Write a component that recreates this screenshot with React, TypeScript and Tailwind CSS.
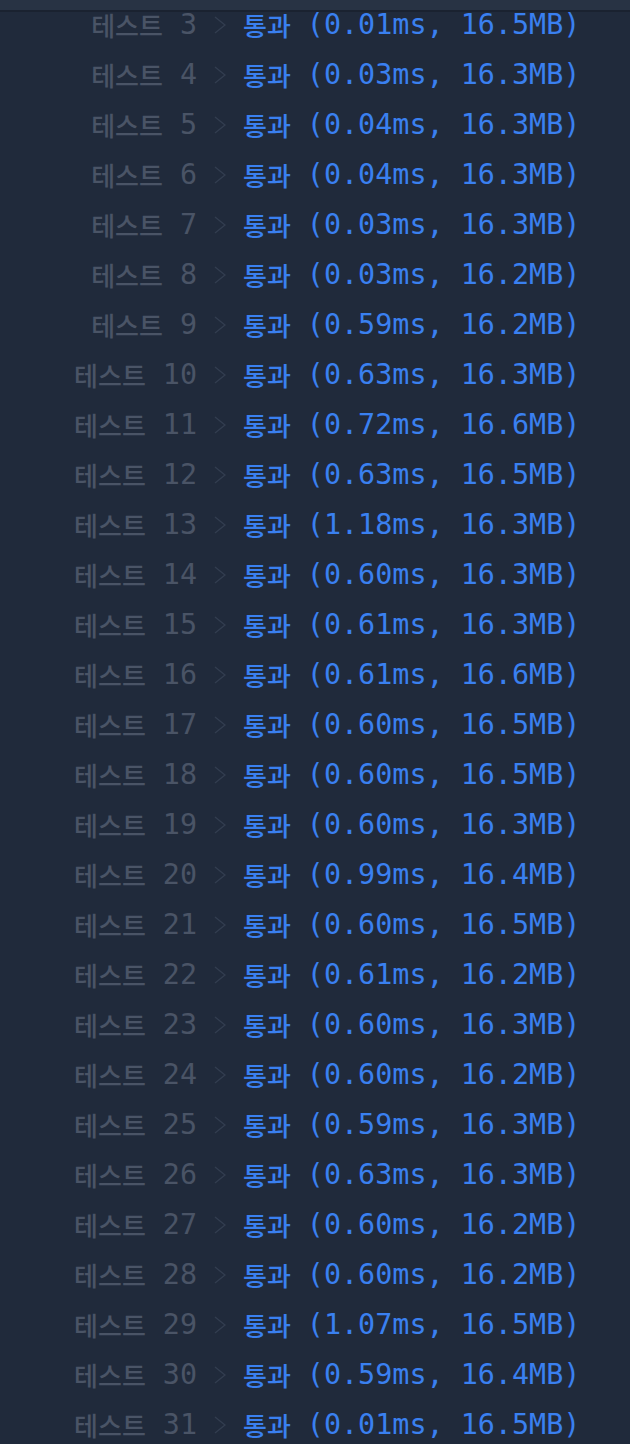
const rows: [number, string, string][] = [
  [3, '0.01', '16.5'],
  [4, '0.03', '16.3'],
  [5, '0.04', '16.3'],
  [6, '0.04', '16.3'],
  [7, '0.03', '16.3'],
  [8, '0.03', '16.2'],
  [9, '0.59', '16.2'],
  [10, '0.63', '16.3'],
  [11, '0.72', '16.6'],
  [12, '0.63', '16.5'],
  [13, '1.18', '16.3'],
  [14, '0.60', '16.3'],
  [15, '0.61', '16.3'],
  [16, '0.61', '16.6'],
  [17, '0.60', '16.5'],
  [18, '0.60', '16.5'],
  [19, '0.60', '16.3'],
  [20, '0.99', '16.4'],
  [21, '0.60', '16.5'],
  [22, '0.61', '16.2'],
  [23, '0.60', '16.3'],
  [24, '0.60', '16.2'],
  [25, '0.59', '16.3'],
  [26, '0.63', '16.3'],
  [27, '0.60', '16.2'],
  [28, '0.60', '16.2'],
  [29, '1.07', '16.5'],
  [30, '0.59', '16.4'],
  [31, '0.01', '16.5'],
];

const mono = "font-['DejaVu_Sans_Mono','Liberation_Mono','Noto_Sans_CJK_KR',monospace]";
const kr = "font-['Noto_Sans_CJK_KR','Noto_Sans',sans-serif]";

const Chevron = () => (
  <svg width="12" height="18" viewBox="0 0 12 18" className="shrink-0">
    <path d="M1 1 L11 9 L1 17" fill="none" stroke="#333e50" strokeWidth="1.3" />
  </svg>
);

export default function App() {
  return (
    <div className="w-[630px] h-[1444px] bg-[#202a3b] overflow-hidden">
      <div className="h-[10px] bg-[#283344]" />
      <div className="h-[2px] bg-[#1a2230]" />
      <div className="-mt-[12px]">
        {rows.map(([n, t, m]) => (
          <div key={n} className={`flex items-center h-[50px] text-[28.4px] leading-none ${mono}`}>
            <div className="w-[197px] flex justify-end items-center text-[#4a5466]">
              <span className={`${kr} text-[26px] font-medium`}>테스트</span>
              <span className="ml-[17px]">{n}</span>
            </div>
            <div className="ml-[17px]">
              <Chevron />
            </div>
            <span className={`${kr} text-[26px] font-medium ml-[17px] text-[#3a80f0]`}>통과</span>
            <span className="ml-[16px] text-[#3a80f0]">
              ({t}ms, {m}MB)
            </span>
          </div>
        ))}
      </div>
    </div>
  );
}
